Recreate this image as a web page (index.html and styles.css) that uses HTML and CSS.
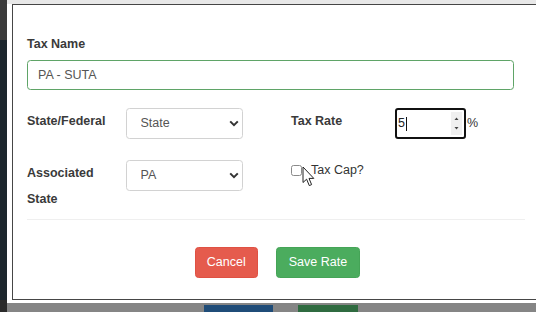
FILE: index.html
```html
<!DOCTYPE html>
<html lang="en">
<head>
<meta charset="utf-8">
<title>Tax Rate</title>
<link rel="stylesheet" href="styles.css">
</head>
<body>
<div class="screen">
  <div class="edge"></div>
  <div class="main">
    <div class="frame">
      <div class="dialog">
        <div class="field">
          <label class="label" for="taxName">Tax Name</label>
          <input id="taxName" class="text-input" type="text" value="PA - SUTA">
        </div>
        <div class="form-grid">
          <label class="label row-label" for="stateFederal">State/Federal</label>
          <div class="select-wrap">
            <select id="stateFederal" class="select"><option>State</option><option>Federal</option></select>
            <svg class="chev" width="10" height="7" viewBox="0 0 10 7"><path d="M1.2 1.4 L5 5.2 L8.8 1.4" fill="none" stroke="#333" stroke-width="2"/></svg>
          </div>
          <span class="spacer"></span>
          <label class="label row-label">Tax Rate</label>
          <div class="rate">
            <div class="num-field">
              <span class="num-value">5</span><span class="caret"></span>
              <span class="spin">
                <svg width="11" height="23" viewBox="0 0 11 23"><path d="M3.5 8 L5.5 5.5 L7.5 8 Z" fill="#444"/><path d="M3.5 15 L5.5 17.5 L7.5 15 Z" fill="#444"/></svg>
              </span>
            </div>
            <span class="pct">%</span>
          </div>
          <label class="label row-label" for="assocState">Associated State</label>
          <div class="select-wrap">
            <select id="assocState" class="select"><option>PA</option></select>
            <svg class="chev" width="10" height="7" viewBox="0 0 10 7"><path d="M1.2 1.4 L5 5.2 L8.8 1.4" fill="none" stroke="#333" stroke-width="2"/></svg>
          </div>
          <span class="spacer"></span>
          <div class="cap">
            <input id="taxCap" class="check" type="checkbox">
            <label class="cap-label" for="taxCap">Tax Cap?</label>
            <svg class="cursor" width="14" height="22" viewBox="0 0 14 22"><path d="M1 1 L1 16.5 L4.6 13.2 L7.3 19.6 L9.6 18.6 L7 12.4 L11.8 12.4 Z" fill="#fff" stroke="#222" stroke-width="1" stroke-linejoin="round"/></svg>
          </div>
        </div>
        <div class="divider"></div>
        <div class="footer">
          <button class="btn btn-cancel" type="button">Cancel</button>
          <button class="btn btn-save" type="button">Save Rate</button>
        </div>
      </div>
    </div>
    <div class="under"><span class="under-blue"></span><span class="under-green"></span></div>
  </div>
</div>
</body>
</html>
```
FILE: styles.css
```css
* { box-sizing: border-box; }
html, body { margin: 0; padding: 0; }
body {
  font-family: "Liberation Sans", Arial, sans-serif;
  font-size: 12.5px;
  line-height: 17.5px;
  color: #333;
  background: #2b2b2b;
}
.screen {
  width: 536px;
  height: 312px;
  overflow: hidden;
  display: flex;
}
.edge {
  width: 7px;
  flex: none;
  background: linear-gradient(to bottom, #3b3b3b 0 40px, #1d272e 40px 300px, #2a2a2a 300px);
}
.main {
  flex: 1;
  min-width: 0;
  display: flex;
  flex-direction: column;
}
.frame {
  background: #fff;
  border-top: 4px solid #e8e8e8;
  padding: 0 0 3px 5px;
}
.dialog {
  height: 296px;
  border: 1px solid #464646;
  border-right: 0;
  padding: 31px 0 0 14px;
}
.label {
  display: block;
  font-weight: bold;
  color: #3a3a3a;
}
.field .label { margin-bottom: 6.5px; }
.text-input {
  display: block;
  width: 487px;
  height: 30px;
  margin: 0;
  padding: 0 10px;
  border: 1px solid #5fa467;
  border-radius: 3.5px;
  font: inherit;
  color: #555;
  background: #fff;
  outline: none;
}
.form-grid {
  margin-top: 18px;
  display: grid;
  grid-template-columns: 99px 117px 48px 104px auto;
  row-gap: 21px;
  align-items: start;
}
.row-label { line-height: 26px; padding-right: 14px; }
.select-wrap {
  position: relative;
  width: 117px;
  height: 31px;
}
.select {
  appearance: none;
  -webkit-appearance: none;
  width: 100%;
  height: 100%;
  margin: 0;
  padding: 0 0 0 13.5px;
  border: 1px solid #d2d2d2;
  border-radius: 3.5px;
  background: #fff;
  font: inherit;
  color: #555;
}
.chev {
  position: absolute;
  right: 4px;
  top: 12px;
  pointer-events: none;
}
.rate {
  display: flex;
  align-items: center;
  gap: 1px;
}
.num-field {
  width: 71px;
  height: 31px;
  border: 2px solid #111;
  border-radius: 3px;
  display: flex;
  align-items: center;
  padding-left: 1px;
  background: #fff;
}
.num-value { color: #222; }
.caret {
  width: 1px;
  height: 14px;
  background: #111;
  margin-left: 1px;
}
.spin {
  margin-left: auto;
  margin-right: 2px;
  width: 11px;
  height: 23px;
  background: #f0f0f0;
  display: flex;
}
.pct { color: #333; }
.cap {
  grid-column: 4 / span 2;
  position: relative;
  display: flex;
  align-items: center;
  padding-top: 2px;
}
.check {
  appearance: none;
  -webkit-appearance: none;
  width: 11px;
  height: 11px;
  margin: 0 9px 0 0;
  border: 1px solid #8a8a8a;
  border-radius: 2.5px;
  background: #fff;
}
.cap-label { color: #333; }
.cursor {
  position: absolute;
  left: 11px;
  top: 6px;
}
.divider {
  margin-top: 7px;
  width: 498px;
  height: 1px;
  background: #efefef;
}
.footer {
  margin-top: 27px;
  width: 501px;
  display: flex;
  justify-content: center;
  gap: 18px;
}
.btn {
  font: inherit;
  line-height: 17.5px;
  padding: 5.75px 11px;
  border-radius: 3.5px;
  border: 1px solid transparent;
  color: #fff;
}
.btn-cancel { background: #e55b4d; border-color: #df5143; }
.btn-save { background: #4bac5e; border-color: #45a457; padding: 5.75px 12px; }
.under {
  flex: 1;
  background: #858585;
  display: flex;
  align-items: flex-end;
  padding-left: 197px;
}
.under-blue {
  width: 69px;
  height: 7px;
  background: #1f4c78;
}
.under-green {
  width: 60px;
  height: 7px;
  margin-left: 25px;
  background: #2f6b40;
}
```
